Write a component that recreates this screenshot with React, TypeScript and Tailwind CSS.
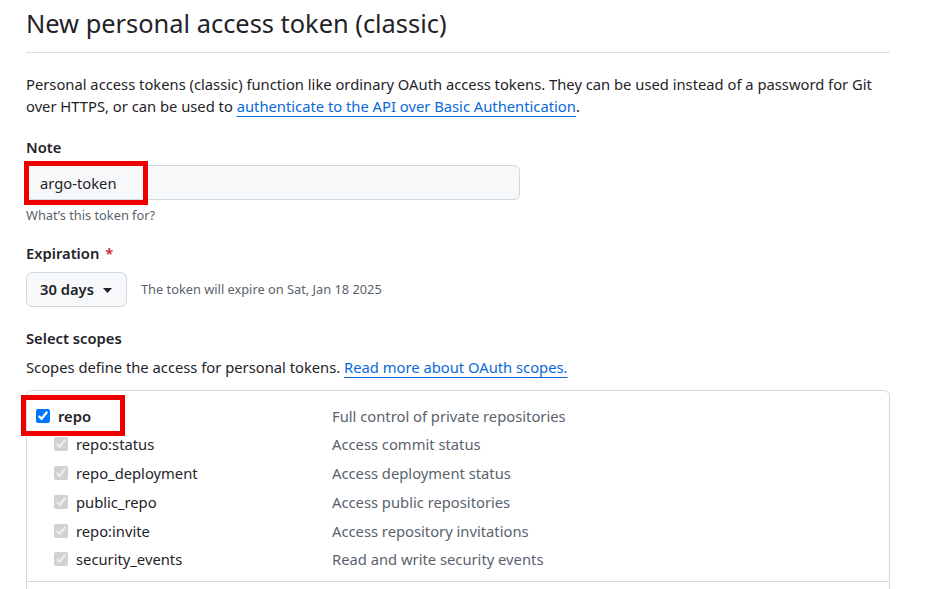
const scopes = [
  { name: "repo:status", desc: "Access commit status" },
  { name: "repo_deployment", desc: "Access deployment status" },
  { name: "public_repo", desc: "Access public repositories" },
  { name: "repo:invite", desc: "Access repository invitations" },
  { name: "security_events", desc: "Read and write security events" },
];

export default function App() {
  return (
    <div
      className="min-h-screen bg-white text-[#1f2328] pl-[26px] pr-[42px] overflow-hidden"
      style={{ fontFamily: '"Noto Sans", "Open Sans", sans-serif' }}
    >
      <h1 className="pt-[3px] pb-[9px] text-[25.4px] leading-[40px] font-normal border-b border-[#d8dee4]">
        New personal access token (classic)
      </h1>

      <p className="mt-[20px] text-[14.75px] leading-[22px]">
        Personal access tokens (classic) function like ordinary OAuth access tokens. They can be used instead of a
        password for Git over HTTPS, or can be used to{" "}
        <a className="text-[#0969da] underline underline-offset-[4px] decoration-1">
          authenticate to the API over Basic Authentication
        </a>
        .
      </p>

      <div className="mt-[19px]">
        <label className="block text-[14.75px] leading-[22px] font-semibold">Note</label>
        <div className="relative mt-[7px] w-[494px]">
          <div className="h-[35px] w-full rounded-[6px] border border-[#d1d9e0] bg-[#f6f8fa] px-[13px] pt-[1px] flex items-center text-[14.75px]">
            argo-token
          </div>
          <div className="absolute left-[-2px] top-[-4px] w-[124px] h-[44px] border-[5px] border-[#ee0000]" />
        </div>
        <p className="mt-[6px] text-[12.8px] leading-[18px] text-[#59636e]">What’s this token for?</p>
      </div>

      <div className="mt-[18px]">
        <label className="block text-[14.75px] leading-[22px] font-semibold">
          Expiration <span className="text-[#d1242f] ml-[2px]">*</span>
        </label>
        <div className="mt-[8px] flex items-center gap-[14px]">
          <div className="h-[35px] w-[101px] rounded-[6px] border border-[#d1d9e0] bg-[#f6f8fa] pl-[13px] flex items-center gap-[9px] text-[14.75px] font-semibold">
            30 days
            <svg width="9" height="5" viewBox="0 0 9 5" className="mt-[1px]">
              <path d="M0 0h9L4.5 5z" fill="#1f2328" />
            </svg>
          </div>
          <span className="text-[12.8px] text-[#59636e]">The token will expire on Sat, Jan 18 2025</span>
        </div>
      </div>

      <div className="mt-[20px]">
        <h2 className="text-[14.75px] leading-[22px] font-semibold">Select scopes</h2>
        <p className="mt-[7px] text-[14.75px] leading-[22px]">
          Scopes define the access for personal tokens.{" "}
          <a className="text-[#0969da] underline underline-offset-[4px] decoration-1">Read more about OAuth scopes.</a>
        </p>
      </div>

      <div className="mt-[12px] rounded-t-[6px] border border-b-0 border-[#d1d9e0] h-[240px]">
        <div className="border-b border-[#d1d9e0] pb-[7px]">
          <div className="relative flex items-center h-[28px] mt-[11px] text-[14.75px]">
            <div className="w-[305px] flex items-center pl-[9px] gap-[8px]">
              <input type="checkbox" checked readOnly className="w-[14px] h-[14px] accent-[#0075ff]" />
              <span className="font-semibold">repo</span>
            </div>
            <span className="text-[#59636e]">Full control of private repositories</span>
            <div className="absolute left-[-6px] top-[-7px] w-[104px] h-[41px] border-[5px] border-[#ee0000]" />
          </div>
          {scopes.map((s) => (
            <div key={s.name} className="flex items-center h-[28.75px] text-[14.75px]">
              <div className="w-[305px] flex items-center pl-[27px] gap-[8px]">
                <input type="checkbox" checked disabled readOnly className="w-[14px] h-[14px]" />
                <span>{s.name}</span>
              </div>
              <span className="text-[#59636e]">{s.desc}</span>
            </div>
          ))}
        </div>
      </div>
    </div>
  );
}
